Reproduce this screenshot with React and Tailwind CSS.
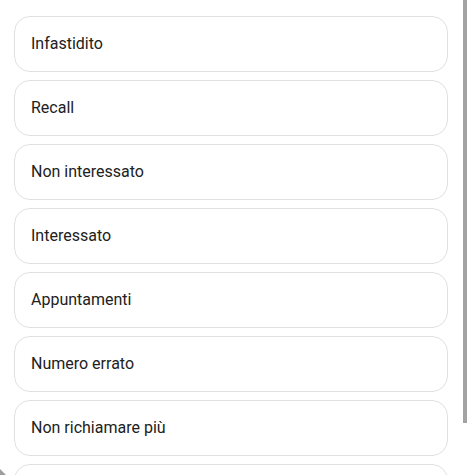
const ITEMS = [
  'Infastidito',
  'Recall',
  'Non interessato',
  'Interessato',
  'Appuntamenti',
  'Numero errato',
  'Non richiamare più',
  'Richiamato',
];

export default function App() {
  return (
    <div className="relative h-[475px] w-[467px] overflow-hidden bg-white" style={{ fontFamily: 'Roboto, "Liberation Sans", sans-serif' }}>
      <div className="flex h-full">
        <div className="flex flex-1 flex-col gap-2 pl-[14px] pr-[15px] pt-4">
          {ITEMS.map(item => (
            <button
              key={item}
              className="flex h-14 shrink-0 items-center rounded-2xl border border-[#e0e0e0] bg-white px-4 text-left text-base text-[#212121]"
            >
              {item}
            </button>
          ))}
        </div>
        <div className="w-1 shrink-0">
          <div className="h-[423px] w-1 bg-[#a3a3a3]" />
        </div>
      </div>
      <div className="absolute bottom-0 left-0 h-0 w-0 border-b-[6px] border-r-[6px] border-b-[#9e9e9e] border-r-transparent" />
    </div>
  );
}
